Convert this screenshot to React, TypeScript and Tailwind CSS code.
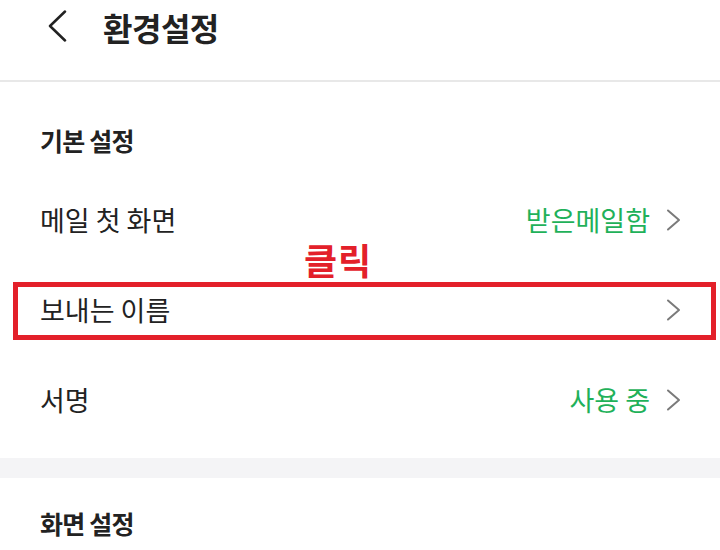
import React from 'react';

const font = { fontFamily: '"Noto Sans CJK KR", "Noto Sans", sans-serif' };

function Chevron() {
  return (
    <svg width="15" height="22" viewBox="0 0 15 22" fill="none" className="shrink-0">
      <path d="M2 1.5 L13 11 L2 20.5" stroke="#7a7a7a" strokeWidth="2" strokeLinecap="round" strokeLinejoin="round" />
    </svg>
  );
}

function Row({ label, value, children }: { label: string; value?: string; children?: React.ReactNode }) {
  return (
    <div className="relative h-[90px] pl-[40px] pr-[39px] flex items-center justify-between">
      <span className="text-[27px] leading-[32px] text-[#222]">{label}</span>
      <div className="flex items-center gap-[16px]">
        {value && <span className="text-[27px] leading-[32px] text-[#1fb15a]">{value}</span>}
        <Chevron />
      </div>
      {children}
    </div>
  );
}

export default function App() {
  return (
    <div className="w-[720px] h-[550px] overflow-hidden bg-white" style={font}>
      <header className="h-[82px] flex items-start pt-[10px] pl-[47px] gap-[36px] border-b-2 border-[#e8e8e8]">
        <svg width="20" height="32" viewBox="0 0 20 32" fill="none" className="shrink-0">
          <path d="M18 1.5 L3 16 L18 30.5" stroke="#222" strokeWidth="2.5" strokeLinecap="round" strokeLinejoin="round" />
        </svg>
        <h1 className="text-[32px] leading-[34px] font-bold text-[#222] tracking-[-0.5px]">환경설정</h1>
      </header>

      <section>
        <h2 className="pt-[42px] pb-[19px] pl-[40px] text-[25px] leading-[32px] font-bold text-[#222] tracking-[-0.8px]">기본 설정</h2>
        <Row label="메일 첫 화면" value="받은메일함" />
        <Row label="보내는 이름">
          <span className="absolute left-[13px] right-[4px] top-[17px] h-[58px] border-[5px] border-[#e3202a] pointer-events-none" />
          <span className="absolute left-[304px] top-[-26px] text-[36px] leading-[40px] font-bold text-[#e3202a] tracking-[1px]">클릭</span>
        </Row>
        <Row label="서명" value="사용 중" />
      </section>

      <div className="mt-[13px] h-[20px] bg-[#f4f4f6]" />

      <section>
        <h2 className="pt-[29px] pl-[40px] text-[25px] leading-[32px] font-bold text-[#222] tracking-[-0.8px]">화면 설정</h2>
      </section>
    </div>
  );
}
